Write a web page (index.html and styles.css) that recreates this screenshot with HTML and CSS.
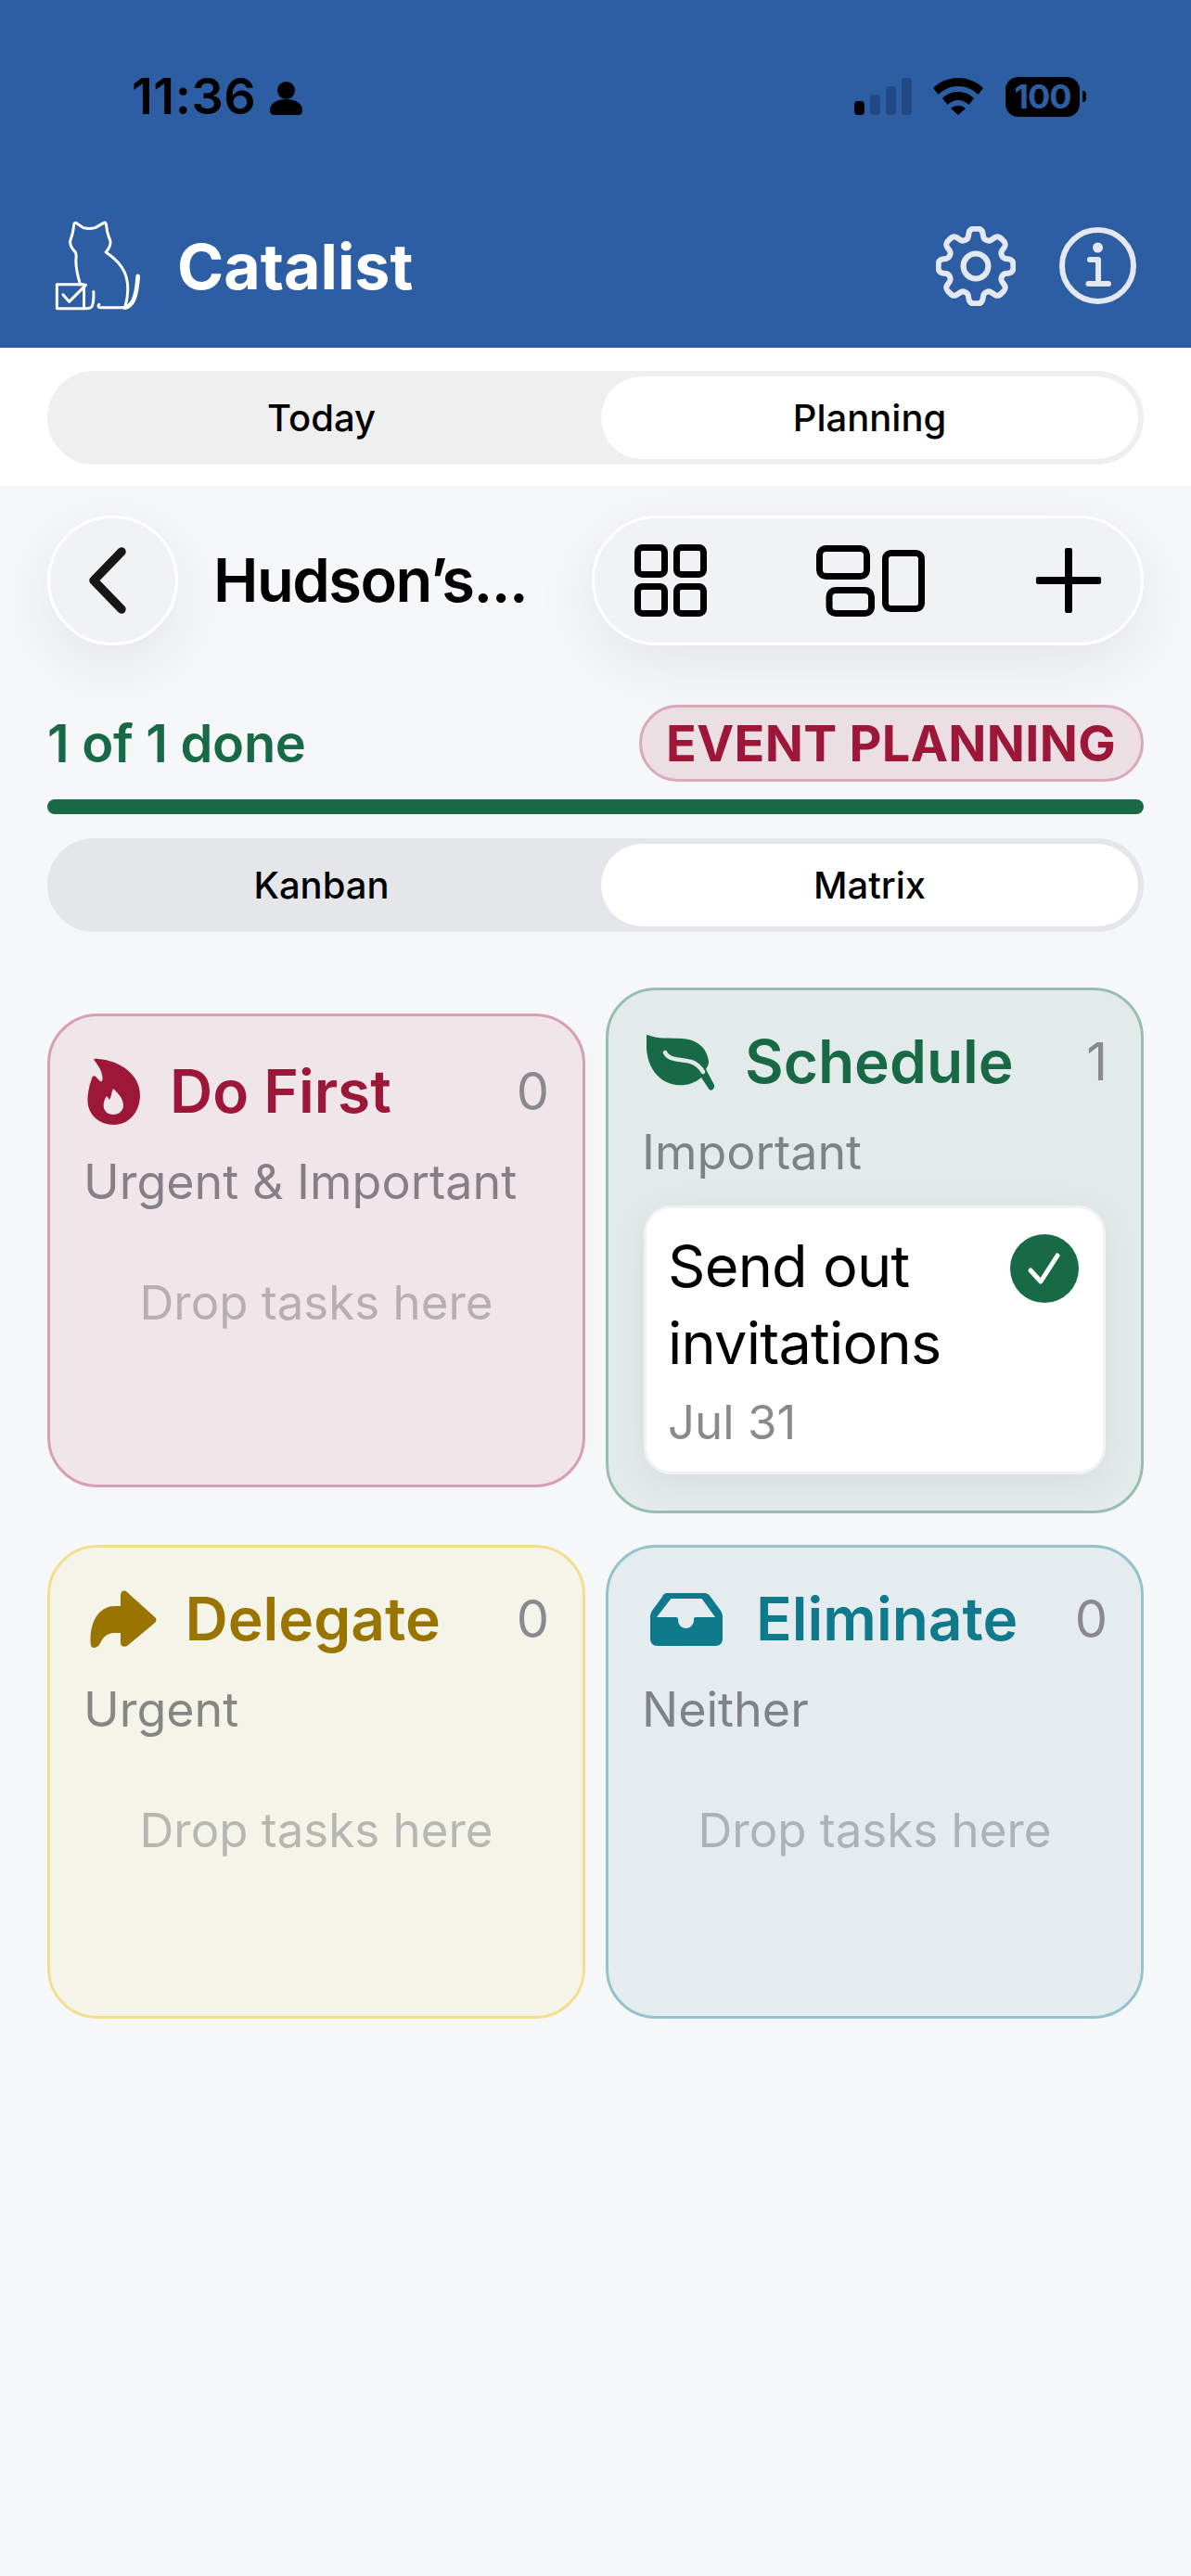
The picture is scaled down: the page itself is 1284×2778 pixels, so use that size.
FILE: index.html
```html
<!DOCTYPE html>
<html lang="en">
<head>
    <meta charset="UTF-8">
    <meta name="viewport" content="width=device-width, initial-scale=1.0">
    <title>Catalist</title>
    <link rel="stylesheet" href="styles.css">
</head>
<body>
    <header class="app-header">
        <div class="status-bar">
            <div class="status-left">
                <span class="clock">11:36</span>
                <svg class="person" viewBox="0 0 35 36"><circle cx="17.5" cy="9.5" r="9.5"/><path d="M0 31c0-8 8-12 17.5-12S35 23 35 31c0 3-1.500 5-5 5H5c-3.500 0-5-2-5-5z"/></svg>
            </div>
            <div class="status-right">
                <div class="signal">
                    <span class="bar bar-1"></span>
                    <span class="bar bar-2"></span>
                    <span class="bar bar-3"></span>
                    <span class="bar bar-4"></span>
                </div>
                <svg class="wifi" viewBox="0 0 54 40"><path d="M27 0c10.500 0 20 4 27 11l-5.500 7C42.500 12 35 9 27 9S11.500 12 5.500 18L0 11C7 4 16.500 0 27 0z"/><path d="M27 15c6.500 0 12.500 2.500 17 7l-5.500 7c-3-3-7-5-11.500-5s-8.500 2-11.500 5L10 22c4.500-4.500 10.500-7 17-7z"/><path d="M27 30c3 0 6 1 8 3l-8 7-8-7c2-2 5-3 8-3z"/></svg>
                <div class="battery">100</div>
                <span class="battery-nub"></span>
            </div>
        </div>
        <div class="app-bar">
            <div class="brand">
                <svg class="logo" viewBox="85 82 280 292">
                    <path d="M168 290C160 262 152 235 154 207C155 195 156 190 152 184C140 172 132 160 136 145C140 132 145 122 146 105C146 92 150 86 156 90L178 105C190 108 205 108 216 105L244 89C250 86 252 92 253 100C254 118 258 130 265 146C268 160 262 172 251 184C275 200 300 222 312 250C324 280 326 320 313 364H232C226 364 225 358 229 354"/>
                    <path d="M211 312C212 330 211 345 207 358C204 366 198 367 182 367"/>
                    <path d="M313 364C335 358 350 340 355 262" class="logo-tail"/>
                    <rect x="92" y="289" width="88" height="78"/>
                    <path d="M112 322L132 345L186 291"/>
                </svg>
                <h1 class="brand-name">Catalist</h1>
            </div>
            <div class="app-actions">
                <svg class="gear" viewBox="2.400 2.400 19.200 19.200"><path d="M10.343 3.94c.09-.542.56-.94 1.11-.94h1.093c.55 0 1.02.398 1.11.94l.149.894c.07.424.384.764.78.93.398.164.855.142 1.205-.108l.737-.527a1.125 1.125 0 0 1 1.45.12l.773.774c.39.389.44 1.002.12 1.45l-.527.737c-.25.35-.272.806-.107 1.204.165.397.505.71.93.78l.893.15c.543.09.94.559.94 1.109v1.094c0 .55-.397 1.02-.94 1.11l-.894.149c-.424.07-.764.383-.929.78-.165.398-.143.854.107 1.204l.527.738c.32.447.269 1.06-.12 1.45l-.774.773a1.125 1.125 0 0 1-1.449.12l-.738-.527c-.35-.25-.806-.272-1.203-.107-.398.165-.71.505-.781.929l-.149.894c-.09.542-.56.94-1.11.94h-1.094c-.55 0-1.019-.398-1.11-.94l-.148-.894c-.071-.424-.384-.764-.781-.93-.398-.164-.854-.142-1.204.108l-.738.527c-.447.32-1.06.269-1.45-.12l-.773-.774a1.125 1.125 0 0 1-.12-1.45l.527-.737c.25-.35.272-.806.108-1.204-.165-.397-.506-.71-.93-.78l-.894-.15c-.542-.09-.94-.56-.94-1.11v-1.094c0-.55.398-1.02.94-1.11l.894-.149c.424-.07.765-.383.93-.78.165-.398.143-.854-.108-1.204l-.526-.738a1.125 1.125 0 0 1 .12-1.45l.773-.773a1.125 1.125 0 0 1 1.45-.12l.737.527c.35.25.807.272 1.204.107.397-.165.71-.505.78-.929l.15-.894Z"/><path d="M15 12a3 3 0 1 1-6 0 3 3 0 0 1 6 0Z"/></svg>
                <svg class="info" viewBox="0 0 83 83"><circle class="info-ring" cx="41.500" cy="41.500" r="38.500"/><circle class="info-dot" cx="41.500" cy="22" r="5.500"/><path d="M33 35H42V61M31.500 61H53"/></svg>
            </div>
        </div>
    </header>

    <div class="tab-band">
        <div class="segmented">
            <div class="segment">Today</div>
            <div class="segment segment-active">Planning</div>
        </div>
    </div>

    <main class="content">
        <div class="toolbar">
            <button class="glass back-btn">
                <svg viewBox="0 0 44 74"><path d="M37 6L7 37L37 68"/></svg>
            </button>
            <h2 class="project-title">Hudson’s...</h2>
            <div class="glass tools">
                <svg class="tool-grid" viewBox="0 0 78 78">
                    <rect x="3.500" y="3.500" width="29" height="29" rx="5"/>
                    <rect x="45.500" y="3.500" width="29" height="29" rx="5"/>
                    <rect x="3.500" y="45.500" width="29" height="29" rx="5"/>
                    <rect x="45.500" y="45.500" width="29" height="29" rx="5"/>
                </svg>
                <svg class="tool-columns" viewBox="0 0 117 78">
                    <rect x="3.500" y="4.500" width="51" height="30" rx="7"/>
                    <rect x="14" y="49.500" width="45.500" height="25" rx="7"/>
                    <rect x="74.500" y="9.500" width="39" height="60" rx="6"/>
                </svg>
                <svg class="tool-plus" viewBox="0 0 70 70"><path d="M35 3V67M3 35H67"/></svg>
            </div>
        </div>

        <div class="progress-head">
            <span class="progress-label">1 of 1 done</span>
            <span class="chip">EVENT PLANNING</span>
        </div>
        <div class="progress-bar"></div>

        <div class="segmented segmented-small">
            <div class="segment">Kanban</div>
            <div class="segment segment-active">Matrix</div>
        </div>

        <section class="matrix">
            <div class="quad quad-first">
                <div class="quad-head">
                    <svg class="icon-fire" viewBox="0 0 57 72">
                        <path d="M8 3C6 1 9 .5 12 1C36 3 57 18 57 40C57 58 45 72 29 72C12 72 .5 60 .5 46C.5 36 3 28 5 22C6 18 9 19 10 21L14 25C17 26 17 22 16 18C15 12 11 7 8 3Z"/>
                        <path class="flame-inner" d="M28 33C32 37 39 43 39 51C39 57 34 61 28 61C22 61 17.600 57 17.600 51C17.600 47 19 44 21 41L24 45C26 42 26 37 28 33Z"/>
                    </svg>
                    <span class="quad-title">Do First</span>
                    <span class="quad-count">0</span>
                </div>
                <div class="quad-sub">Urgent &amp; Important</div>
                <div class="quad-empty">Drop tasks here</div>
            </div>

            <div class="quad quad-schedule">
                <div class="quad-head">
                    <svg class="icon-leaf" viewBox="0 0 73 61">
                        <path d="M1 1C12 6 26 4 38 5C54 6 65 14 67 30C67 34 65 36 64 38L73 55C74 59 69 63 67 59L59 47C50 55 38 57 27 54C10 49 -2 32 0 5C0 2 0 0 1 1Z"/>
                        <path class="leaf-vein" d="M20 20C24 29 38 27 48 30C54 32 58 36 61 41"/>
                    </svg>
                    <span class="quad-title">Schedule</span>
                    <span class="quad-count">1</span>
                </div>
                <div class="quad-sub">Important</div>
                <div class="task-card">
                    <div class="task-top">
                        <div class="task-name">Send out invitations</div>
                        <svg class="task-check" viewBox="0 0 74 74"><circle cx="37" cy="37" r="37"/><path d="M22 39L33 51L51 23"/></svg>
                    </div>
                    <div class="task-date">Jul 31</div>
                </div>
            </div>

            <div class="quad quad-delegate">
                <div class="quad-head">
                    <svg class="icon-share" viewBox="0 0 72 62"><path d="M33 5C33 1 37 -1 40 2L70 29C72 31 72 33 70 35L40 60C37 62 33 60 33 57V46H26C18 46 14 51 11 57C9 61 6 62 4 62C1 62 .5 58 .5 54C.5 30 12 17 27 17H33Z"/></svg>
                    <span class="quad-title">Delegate</span>
                    <span class="quad-count">0</span>
                </div>
                <div class="quad-sub">Urgent</div>
                <div class="quad-empty">Drop tasks here</div>
            </div>

            <div class="quad quad-eliminate">
                <div class="quad-head">
                    <svg class="icon-inbox" viewBox="0 0 78 57"><path fill-rule="evenodd" d="M18 0H58C61 0 63 1 65 4L76 19C77 21 78 23 78 25V49C78 54 75 57 70 57H8C3 57 0 54 0 49V25C0 23 1 21 2 19L13 4C14 1 16 0 18 0ZM22 6.500L7 26H27C30 26 30 27 30 29C30 34 34 38 38.500 38C43 38 47 34 47 29C47 27 47 26 50 26H70L56 6.500C55 6 55 6 54 6H24C23 6 23 6 22 6.500Z"/></svg>
                    <span class="quad-title">Eliminate</span>
                    <span class="quad-count">0</span>
                </div>
                <div class="quad-sub">Neither</div>
                <div class="quad-empty">Drop tasks here</div>
            </div>
        </section>
    </main>
</body>
</html>
```

FILE: styles.css
```css
* {
    box-sizing: border-box;
}

html, body {
    margin: 0;
    padding: 0;
}

body {
    width: 1284px;
    height: 2778px;
    overflow: hidden;
    font-family: Inter, "Liberation Sans", sans-serif;
    background-color: #f6f7f9;
    color: #000;
}

/* blue header */
.app-header {
    height: 375px;
    background-color: #2d5ea4;
    display: flex;
    flex-direction: column;
}

.status-bar {
    height: 44px;
    margin-top: 82px;
    padding: 0 113px 0 142px;
    display: flex;
    justify-content: space-between;
    align-items: center;
}

.status-left {
    display: flex;
    align-items: center;
    gap: 15px;
}

.clock {
    font-size: 54px;
    font-weight: 600;
    letter-spacing: 0.500px;
    line-height: 44px;
}

.person {
    width: 35px;
    height: 36px;
    margin-top: 3px;
}

.status-right {
    display: flex;
    align-items: center;
}

.signal {
    display: flex;
    align-items: flex-end;
    gap: 6px;
    height: 40px;
    margin-right: 23px;
}

.bar {
    width: 11px;
    border-radius: 4px;
    background-color: #214a85;
}

.bar-1 { height: 15px; background-color: #000; }
.bar-2 { height: 22px; }
.bar-3 { height: 31px; }
.bar-4 { height: 40px; }

.wifi {
    width: 54px;
    height: 40px;
    margin-right: 24px;
}

.battery {
    width: 80px;
    height: 43px;
    border-radius: 14px;
    background-color: #000;
    color: #2d5ea4;
    font-size: 36px;
    font-weight: 700;
    line-height: 43px;
    letter-spacing: -1px;
    text-align: center;
}

.battery-nub {
    width: 4px;
    height: 12px;
    margin-left: 3px;
    border-radius: 0 6px 6px 0;
    background-color: #000;
}

.app-bar {
    margin-top: 112px;
    padding: 0 59px;
    display: flex;
    justify-content: space-between;
    align-items: center;
}

.brand {
    display: flex;
    align-items: center;
    gap: 39px;
}

.logo {
    width: 93px;
    height: 97px;
    fill: none;
    stroke: #fff;
    stroke-width: 9;
    stroke-linecap: round;
    stroke-linejoin: round;
}

.logo-tail {
    stroke-width: 14;
}

.brand-name {
    margin: 0;
    color: #fff;
    font-size: 68px;
    font-weight: 700;
    line-height: 80px;
}

.app-actions {
    display: flex;
    align-items: center;
    gap: 47px;
    fill: none;
    stroke: #e3e8f2;
    stroke-linecap: round;
    stroke-linejoin: round;
}

.gear {
    width: 86px;
    height: 86px;
    stroke-width: 1.350;
}

.info {
    width: 83px;
    height: 83px;
    stroke-width: 6;
}

.info-dot {
    fill: #e3e8f2;
    stroke: none;
}

/* segmented controls */
.tab-band {
    height: 149px;
    padding: 25px 51px 0;
    background-color: #fff;
}

.segmented {
    height: 101px;
    padding: 6px;
    border-radius: 50px;
    background-color: #efeff0;
    display: grid;
    grid-template-columns: 1fr 579px;
}

.segment {
    padding-right: 12px;
    border-radius: 45px;
    font-size: 40px;
    font-weight: 500;
    line-height: 89px;
    text-align: center;
}

.segment-active {
    padding-right: 0;
    background-color: #fff;
}

.segmented-small {
    margin-top: 26px;
    background-color: #e5e6ea;
}

/* planning content */
.content {
    padding: 32px 51px 0;
}

.toolbar {
    display: flex;
    align-items: center;
}

.glass {
    height: 140px;
    padding: 0;
    border: 3px solid #fff;
    border-radius: 70px;
    background-color: #f1f2f3;
    box-shadow: 0 20px 70px rgba(0, 0, 0, 0.08);
}

.back-btn {
    width: 141px;
    display: flex;
    align-items: center;
    justify-content: center;
}

.back-btn svg {
    width: 44px;
    height: 74px;
    margin-right: 12px;
    fill: none;
    stroke: #161616;
    stroke-width: 9.500;
    stroke-linecap: round;
    stroke-linejoin: round;
}

.project-title {
    flex: 1;
    margin: 0 0 0 38px;
    font-size: 65px;
    font-weight: 600;
    line-height: 80px;
    letter-spacing: -1.500px;
}

.tools {
    width: 595px;
    padding: 0 43px;
    display: flex;
    align-items: center;
    fill: none;
    stroke: #000;
    stroke-linecap: round;
    stroke-linejoin: round;
}

.tool-grid {
    width: 78px;
    height: 78px;
    stroke-width: 7;
}

.tool-columns {
    width: 117px;
    height: 78px;
    margin-left: 118px;
    stroke-width: 7;
}

.tool-plus {
    width: 70px;
    height: 70px;
    margin-left: 120px;
    stroke-width: 8;
}

.progress-head {
    margin-top: 64px;
    display: flex;
    justify-content: space-between;
    align-items: center;
}

.progress-label {
    color: #186a47;
    font-size: 56px;
    font-weight: 600;
    letter-spacing: -0.300px;
}

.chip {
    height: 83px;
    padding: 0 27px 0 26px;
    border: 3px solid #d9a9b6;
    border-radius: 42px;
    background-color: #ecdfe4;
    color: #9d1838;
    font-size: 54px;
    font-weight: 700;
    line-height: 77px;
    letter-spacing: 0.300px;
}

.progress-bar {
    height: 16px;
    margin-top: 19px;
    border-radius: 8px;
    background-color: #186a47;
}

/* the four quadrants */
.matrix {
    margin-top: 60px;
    display: grid;
    grid-template-columns: 580px 580px;
    justify-content: space-between;
    row-gap: 34px;
    align-items: center;
}

.quad {
    min-height: 511px;
    padding: 41px 38px 39px;
    border: 3px solid;
    border-radius: 54px;
}

.quad-first {
    background-color: #f0e6ea;
    border-color: #d79fb0;
    color: #9d1838;
    padding-top: 44px;
}

.quad-schedule {
    background-color: #e3ebea;
    border-color: #97bfb0;
    color: #186a47;
}

.quad-delegate {
    background-color: #f4f4e9;
    border-color: #f3de8f;
    color: #997500;
}

.quad-eliminate {
    background-color: #e4ecef;
    border-color: #94c3cd;
    color: #0e7a8c;
}

.quad-head {
    display: flex;
    align-items: center;
    height: 72px;
    fill: currentColor;
}

.quad-first .quad-head {
    height: 73px;
}

.quad-title {
    flex: 1;
    font-size: 64px;
    font-weight: 600;
    line-height: 72px;
}

.quad-count {
    margin-right: -2px;
    color: #8a8a8e;
    font-size: 56px;
    font-weight: 400;
    line-height: 72px;
}

.icon-fire {
    width: 57px;
    height: 72px;
    margin: 0 32px 0 2px;
}

.flame-inner {
    fill: #f0e6ea;
}

.icon-leaf {
    width: 73px;
    height: 61px;
    margin: 0 33px 0 3px;
}

.leaf-vein {
    fill: none;
    stroke: #e3ebea;
    stroke-width: 4.500;
    stroke-linecap: round;
}

.icon-share {
    width: 72px;
    height: 62px;
    margin: 0 31px 0 4.500px;
}

.icon-inbox {
    width: 78px;
    height: 57px;
    margin: 0 36px 0 7px;
}

.quad-sub {
    margin: 31px 0 0 -2px;
    color: rgba(60, 60, 67, 0.6);
    font-size: 52px;
    line-height: 62px;
}

.quad-empty {
    margin-top: 68px;
    color: rgba(60, 60, 67, 0.33);
    font-size: 51px;
    line-height: 62px;
    text-align: center;
}

.task-card {
    margin-top: 26px;
    padding: 21px 26px 22px 23px;
    border: 3px solid #f1f2f2;
    border-radius: 30px;
    background-color: #fff;
    box-shadow: 0 8px 40px rgba(0, 0, 0, 0.06);
    color: #000;
}

.task-top {
    display: flex;
    justify-content: space-between;
    align-items: flex-start;
}

.task-name {
    width: 330px;
    font-size: 63px;
    line-height: 83px;
    letter-spacing: -0.750px;
}

.task-check {
    width: 74px;
    height: 74px;
    margin-top: 7px;
    flex-shrink: 0;
}

.task-check circle {
    fill: #186a47;
}

.task-check path {
    fill: none;
    stroke: #fff;
    stroke-width: 5;
    stroke-linecap: round;
    stroke-linejoin: round;
}

.task-date {
    margin-top: 13px;
    color: #8a8a8e;
    font-size: 51px;
    line-height: 62px;
}
```
